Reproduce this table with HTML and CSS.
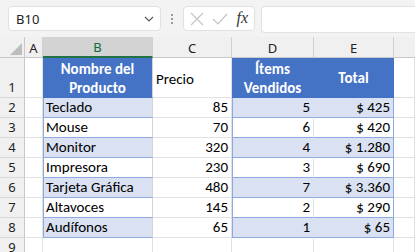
FILE: index.html
```html
<!DOCTYPE html>
<html lang="es">
<head>
<meta charset="utf-8">
<title>Hoja</title>
<link rel="stylesheet" href="styles.css">
</head>
<body>
<div class="app">
  <div class="fbar">
    <div class="namebox">
      <span class="nb-text">B10</span>
      <svg class="chev" width="10" height="6" viewBox="0 0 10 6"><path d="M1 1 L5 5 L9 1" fill="none" stroke="#555" stroke-width="1.1"/></svg>
    </div>
    <div class="dots"><span></span><span></span><span></span></div>
    <div class="iconbox">
      <svg width="14" height="14" viewBox="0 0 14 14"><path d="M1 1 L13 13 M13 1 L1 13" stroke="#c4c4c4" stroke-width="1.2" fill="none"/></svg>
      <svg width="16" height="12" viewBox="0 0 16 12"><path d="M1 6 L6 11 L15 1" stroke="#c4c4c4" stroke-width="1.2" fill="none"/></svg>
      <span class="fx">fx</span>
    </div>
    <div class="input"></div>
  </div>
  <div class="sheet">
    <div class="corner"><span class="tri"></span></div>
    <div class="ch">A</div>
    <div class="ch sel">B</div>
    <div class="ch">C</div>
    <div class="ch">D</div>
    <div class="ch">E</div>
    <div class="ch last"></div>

    <div class="rh">1</div>
    <div class="c"></div>
    <div class="c th tb">Nombre del<br>Producto</div>
    <div class="c mid">Precio</div>
    <div class="c th">Ítems<br>Vendidos</div>
    <div class="c th">Total</div>
    <div class="c"></div>

    <div class="rh">2</div><div class="c"></div>
    <div class="c b tl tb">Teclado</div><div class="c r">85</div>
    <div class="c b tl r">5</div><div class="c b tr r">$ 425</div><div class="c"></div>

    <div class="rh">3</div><div class="c"></div>
    <div class="c w tl tb">Mouse</div><div class="c r">70</div>
    <div class="c w tl r">6</div><div class="c w tr r">$ 420</div><div class="c"></div>

    <div class="rh">4</div><div class="c"></div>
    <div class="c b tl tb">Monitor</div><div class="c r">320</div>
    <div class="c b tl r">4</div><div class="c b tr r">$ 1.280</div><div class="c"></div>

    <div class="rh">5</div><div class="c"></div>
    <div class="c w tl tb">Impresora</div><div class="c r">230</div>
    <div class="c w tl r">3</div><div class="c w tr r">$ 690</div><div class="c"></div>

    <div class="rh">6</div><div class="c"></div>
    <div class="c b tl tb">Tarjeta Gráfica</div><div class="c r">480</div>
    <div class="c b tl r">7</div><div class="c b tr r">$ 3.360</div><div class="c"></div>

    <div class="rh">7</div><div class="c"></div>
    <div class="c w tl tb">Altavoces</div><div class="c r">145</div>
    <div class="c w tl r">2</div><div class="c w tr r">$ 290</div><div class="c"></div>

    <div class="rh">8</div><div class="c"></div>
    <div class="c b tl tb">Audífonos</div><div class="c r">65</div>
    <div class="c b tl r">1</div><div class="c b tr r">$ 65</div><div class="c"></div>

    <div class="rh">9</div><div class="c"></div>
    <div class="c"></div><div class="c"></div>
    <div class="c"></div><div class="c"></div><div class="c"></div>
  </div>
</div>
</body>
</html>
```
FILE: styles.css
```css
html, body {
  margin: 0;
  padding: 0;
  background: #ffffff;
  overflow: hidden;
}
.app {
  width: 415px;
  height: 252px;
  overflow: hidden;
  background: #f3f3f3;
}
.fbar {
  height: 37px;
  display: flex;
  align-items: flex-start;
  padding-top: 6px;
  box-sizing: border-box;
  font-family: "Noto Sans", "Open Sans", sans-serif;
}
.namebox {
  margin-left: 8px;
  width: 153px;
  height: 25px;
  box-sizing: border-box;
  background: #fff;
  border: 1px solid #e1e1e1;
  border-radius: 4px;
  display: flex;
  align-items: center;
  justify-content: space-between;
  padding: 0 6px 0 7px;
}
.nb-text {
  font-size: 13px;
  color: #222;
}
.chev { margin-top: 1px; }
.dots {
  width: 22px;
  height: 25px;
  display: flex;
  flex-direction: column;
  align-items: center;
  justify-content: center;
  gap: 2px;
}
.dots span {
  width: 2px;
  height: 2px;
  background: #9a9a9a;
}
.iconbox {
  width: 72px;
  height: 25px;
  box-sizing: border-box;
  background: #fff;
  border: 1px solid #e1e1e1;
  border-radius: 4px;
  display: flex;
  align-items: center;
  justify-content: space-between;
  padding: 0 6px 0 6px;
}
.fx {
  font-family: "Liberation Serif", serif;
  font-style: italic;
  font-size: 16px;
  color: #333;
  margin-top: -2px;
}
.input {
  margin-left: 6px;
  flex: 1;
  height: 25px;
  background: #fff;
  border: 1px solid #e1e1e1;
  border-right: none;
  border-radius: 4px 0 0 4px;
}
.sheet {
  display: grid;
  grid-template-columns: 25px 18px 110px 79px 82px 80px 1fr;
  grid-template-rows: 21px 40px repeat(8, 20px);
  background: #fff;
  font-family: "Carlito", "Lato", sans-serif;
  font-size: 15px;
  color: #000;
}
.corner {
  background: #f0f0f0;
  border-right: 1px solid #c8c8c8;
  border-bottom: 1px solid #c8c8c8;
  position: relative;
}
.tri {
  position: absolute;
  right: 2px;
  bottom: 2px;
  width: 0;
  height: 0;
  border-left: 12px solid transparent;
  border-bottom: 12px solid #bdbdbd;
}
.ch {
  background: #f0f0f0;
  border-right: 1px solid #d0d0d0;
  border-bottom: 1px solid #c8c8c8;
  font-family: "Noto Sans", "Open Sans", sans-serif;
  font-size: 13px;
  color: #222;
  display: flex;
  align-items: center;
  justify-content: center;
  padding-top: 1px;
  box-sizing: border-box;
}
.ch.sel {
  background: #d3d3d3;
  color: #0f6b38;
  border-bottom: 2px solid #217346;
}
.ch.last { border-right: none; }
.rh {
  background: #f0f0f0;
  border-right: 1px solid #c8c8c8;
  border-bottom: 1px solid #d8d8d8;
  font-family: "Noto Sans", "Open Sans", sans-serif;
  font-size: 13px;
  color: #222;
  display: flex;
  align-items: flex-end;
  justify-content: center;
  padding-bottom: 1px;
  box-sizing: border-box;
}
.c {
  border-right: 1px solid #e1e1e1;
  border-bottom: 1px solid #e1e1e1;
  box-sizing: border-box;
  display: flex;
  align-items: flex-end;
  padding: 0 3px 1px 3px;
  white-space: nowrap;
  line-height: 18px;
}
.c.r { justify-content: flex-end; }
.c.mid { align-items: center; padding-top: 3px; }
.c.th {
  background: #4472c4;
  color: #fff;
  font-weight: bold;
  text-align: center;
  justify-content: center;
  align-items: center;
  line-height: 19px;
  padding-top: 3px;
  border-bottom-color: #4472c4;
  border-right-color: #4472c4;
}
.c.b {
  background: #d9e1f2;
  border-bottom-color: #8ea9db;
  border-right-color: #d9e1f2;
}
.c.w {
  border-bottom-color: #8ea9db;
}
.c.tl { box-shadow: inset 1px 0 0 #8ea9db; }
.c.tr { border-right-color: #8ea9db; }
.c.tb { border-right-color: #d4d4d4; }
```
